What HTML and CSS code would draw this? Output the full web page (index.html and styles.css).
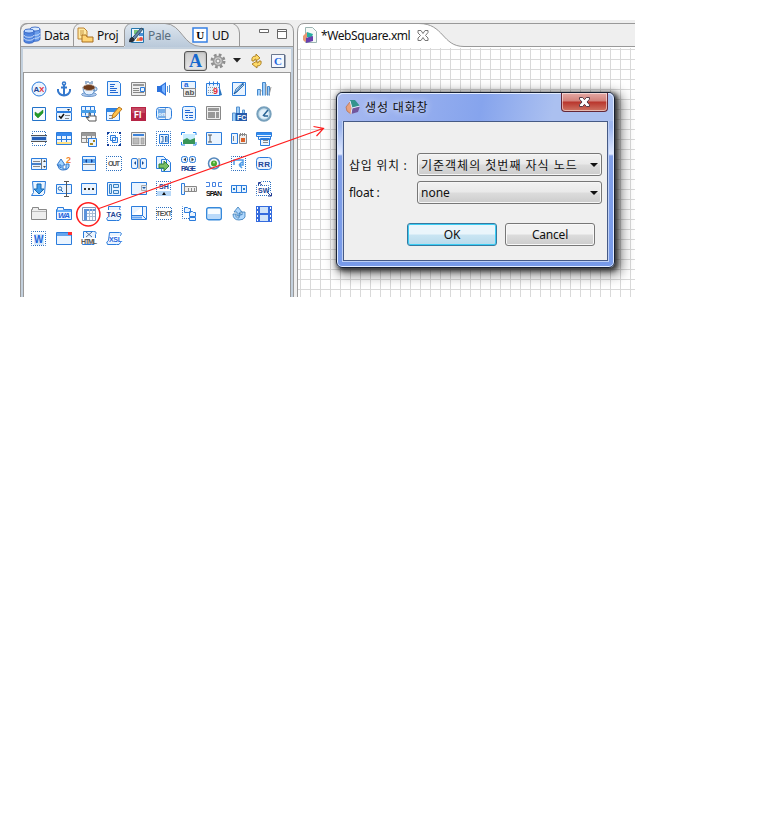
FILE: index.html
```html
<!DOCTYPE html>
<html lang="ko">
<head>
<meta charset="utf-8">
<title>WebSquare</title>
<link rel="stylesheet" href="styles.css">
</head>
<body>
<main class="workbench">
<section class="side">
  <svg class="tabshape" width="274" height="28" viewBox="0 0 274 28">
    <defs><linearGradient id="tabfill" x1="0" y1="0" x2="0" y2="1"><stop offset="0" stop-color="#dce5ee"/><stop offset="1" stop-color="#b8c8d9"/></linearGradient></defs>
    <path d="M.5 28V10Q.5 3.500 7 3.500H266Q273.500 3.500 273.500 12V28" fill="#efefef" stroke="#999"/>
    <path d="M104.500 28V10Q104.500 4 111 4H145C162 4 163 26.500 181 26.500V28Z" fill="url(#tabfill)"/>
    <path d="M.5 27.500V10Q2 4 8 3.500M53.500 26V10Q55 4 60 3.500M104.500 26V10Q106 4 111 3.500H145C162 4 163 26.500 181 26.500H273M0 26.500H104M219.500 26V13Q219 6 213 3.500" fill="none" stroke="#999"/>
  </svg>
  <nav class="tabs">
    <div class="tab data"><svg width="18" height="18" viewBox="0 0 18 18"><g stroke="#2458bd" stroke-width=".8"><path d="M7 3v10c0 3 10 3 10 0V3" fill="#6d9fec"/><ellipse cx="12" cy="3" rx="5" ry="2" fill="#d8eaff"/><path d="M7 7c0 3 10 3 10 0M7 10c0 3 10 3 10 0" fill="none" stroke="#dcecff"/><path d="M1 5v10c0 3 10 3 10 0V5" fill="#5185df"/><ellipse cx="6" cy="5" rx="5" ry="2" fill="#b9d5ff"/><path d="M1 9c0 3 10 3 10 0M1 12c0 3 10 3 10 0" fill="none" stroke="#e5f0ff"/></g></svg><span>Data</span></div>
    <div class="tab proj"><svg width="17" height="17" viewBox="0 0 17 17"><path d="M1 1h6l3 3v8H1z" fill="#ffe9a2" stroke="#bd8435"/><path d="M3 4h4M3 6h4M3 8h3" stroke="#c99847"/><path d="M5 15V8h4l1 2h6v5z" fill="#ffd475" stroke="#a76e20"/></svg><span>Proj</span></div>
    <div class="tab pale"><svg width="17" height="17" viewBox="0 0 17 17"><path d="M3.500 1.500h12v14h-12z" fill="#e8f4ff" stroke="#2577ad"/><path d="M6 3h4v4H6z" fill="#7ac879"/><path d="M8 14l2-4 2 4z" fill="#ef9a32"/><circle cx="13" cy="12" r="2" fill="#e84e46"/><path d="M11 6h4v3h-4z" fill="#4a91d8"/><path d="M1 15q0-5 4-5l2 2q-1 4-6 3" fill="#252d38"/><path d="M5 10L13 1l2 1-8 10" fill="#6389a7" stroke="#304d69"/></svg><span>Pale</span></div>
    <div class="tab ud"><svg width="16" height="16" viewBox="0 0 16 16"><rect x="1" y="1" width="14" height="14" fill="#fff" stroke="#3680e4" stroke-width="1.500"/><text x="8" y="12" class="slab">U</text></svg><span>UD</span></div>
    <svg class="winbtns" width="30" height="12" viewBox="0 0 30 12"><path d="M.5.5h9v3h-9zM18.500.5h9v9h-9zM19 2.500h8" fill="#fff" stroke="#666"/></svg>
  </nav>
  <div class="sidebody">
    <div class="toolbar">
      <div class="abtn">A</div>
      <svg class="gear" width="16" height="16" viewBox="0 0 16 16"><circle cx="8" cy="8" r="6" fill="none" stroke="#8e8e8e" stroke-width="3" stroke-dasharray="2.600 2.110"/><circle cx="8" cy="8" r="4.500" fill="#ccc" stroke="#999" stroke-width="1.500"/><circle cx="8" cy="8" r="2" fill="#f0f0f0" stroke="#8b8b8b"/></svg>
      <svg class="drop" width="8" height="5" viewBox="0 0 8 5"><path d="M0 0h8L4 4.500z" fill="#222"/></svg>
      <svg class="sync" width="16" height="16" viewBox="0 0 16 16"><g fill="#ffda67" stroke="#a77c20" stroke-width=".9"><path d="M4 8Q3 3 8 3V1l4 4-4 3V6Q6 6 6 8z"/><path d="M13 8q1 5-4 5v2l-5-4 5-3v2q2 0 2-2z"/></g></svg>
      <svg class="cbtn" width="16" height="16" viewBox="0 0 16 16"><path d="M1.500 1.500h13v13h-13z" fill="#f4f8ff" stroke="#6b7890"/><path d="M2 14.500h13V2" fill="none" stroke="#52627f"/><text x="8" y="12" class="slab blue">C</text></svg>
    </div>
    <div class="palette">
<svg viewBox="0 0 16 16"><circle class="o" cx="8" cy="8" r="7"/><text x="2.500" y="11" class="t8 navy">A</text><text x="8" y="11" class="t8 r">X</text></svg>
<svg viewBox="0 0 16 16"><g fill="none" stroke="#3478cd" stroke-width="2"><circle cx="8" cy="2.500" r="1.500" stroke-width="1.500"/><path d="M8 4v10M5 6.500h6M2 8v2q1 4 6 4.500 5-.5 6-4.500V8"/></g></svg>
<svg viewBox="0 0 16 16"><path d="M5 0v3M7 0v2M9 1v2M11 0v3" stroke="#3769a2"/><ellipse cx="8" cy="13.500" rx="7.500" ry="2" fill="#b2cbed" stroke="#6c96cb"/><path d="M2 6q0 8 6 8t6-8" fill="#e5f1ff" stroke="#568bc7"/><circle cx="14" cy="8" r="2" fill="none" stroke="#568bc7"/><ellipse cx="8" cy="6.500" rx="6" ry="3" fill="#6e3b1c" stroke="#b9aca6"/></svg>
<svg viewBox="0 0 16 16"><path class="b" d="M1.500.5h11l2 2v12h-13z"/><path class="l" d="M4 3.500h5M4 5.500h4M4 7.500h7M4 9.500h6M4 11.500h8"/></svg>
<svg viewBox="0 0 16 16"><path class="g" d="M.5 1.500h14v13H.5z"/><path d="M2 3h11v2H2z" fill="#999"/><path class="gl" d="M2 7.500h6M2 9.500h6M2 11.500h11"/><path class="b" d="M9.500 6.500h4v4h-4z"/></svg>
<svg viewBox="0 0 16 16"><path d="M1 5h3l6-4v14l-6-4H1z" fill="#2c72dd"/><path d="M6 5l3-2v10L6 10z" fill="#7bb4ff"/><path d="M11.500 5v6M13.500 4v8" stroke="#5791cf"/></svg>
<svg viewBox="0 0 16 16"><path class="b" d="M.5.5h14v7H.5z"/><path class="g" d="M2.500 7.500h12v8h-12z"/><text class="t8 blue" x="3" y="6">a</text><text class="t8 gray" x="4" y="14">ab</text></svg>
<svg viewBox="0 0 16 16"><path d="M13 4l3 10-3 1z" fill="#2b75bf"/><path class="b" d="M.5 2.500h13v12H.5zM3.500.5v4M7.500.5v4M11.500.5v4"/><path d="M2 6.500h11M2 9.500h5M2 11.500h5" stroke="#999" stroke-dasharray="1 1"/><text x="7" y="13" class="t9 r">9</text></svg>
<svg viewBox="0 0 16 16"><path class="b" d="M1.500 1.500h13v13h-13z"/><path d="M3 13l2-5 7-6 1 2-7 7z" fill="#d9efff" stroke="#3779b7"/><path d="M3 13l9-10" stroke="#1452a1"/></svg>
<svg viewBox="0 0 16 16"><path d="M1.500 14.500v-6h3v6M6.500 14.500v-13h3v13M11.500 14.500v-9h2v9" fill="#9ccfff" stroke="#4688cb"/><path d="M4 14l1-5M10 14V3M13 14l2-8" stroke="#999"/></svg>
<svg viewBox="0 0 16 16"><path d="M1.500 1.500h13v13h-13z" fill="#f7faff" stroke="#2272c8"/><path d="M4 6l3 2 5-4v3l-5 5-3-3z" fill="#249c29" stroke="#197d20" stroke-width=".5"/></svg>
<svg viewBox="0 0 16 16"><path class="b" d="M.5 1.500h15v4H.5zM.5 6.500h15v8H.5z"/><path d="M11 3h3l-1.500 2z" fill="#333"/><path d="M3 10l2 2 3-4" fill="none" stroke="#111" stroke-width="1.500"/><path class="gl" d="M9 9.500h5M9 12.500h4"/></svg>
<svg viewBox="0 0 16 16"><path class="b" d="M.5.5h13v10H.5zM4.500.5v9M9.500.5v9"/><path d="M0 4h15v3H0z" fill="#479ee8"/><path d="M8 15l-3-4 3 1V7h1v3h6v5z" fill="#fff" stroke="#555"/></svg>
<svg viewBox="0 0 16 16"><path class="b" d="M.5 2.500h13v12H.5z"/><path d="M1 3h12v3H1z" fill="#3288e5"/><path class="gl" d="M3 9.500h8M3 12.500h4"/><path d="M6 12l1-4 6-7 3 2-7 8z" fill="#ffc34c" stroke="#bd761b"/></svg>
<svg viewBox="0 0 16 16"><path d="M0 1h15v14H0z" fill="#b62445"/><path d="M1 2h13v5H1z" fill="#c64761"/><text x="3" y="12" class="fl">Fl</text></svg>
<svg viewBox="0 0 16 16"><rect class="b" x=".5" y="1.500" width="15" height="12" rx="3"/><path d="M2 3h7v9H2z" fill="#75ade8"/><path d="M9.500 2v11" stroke="#8caaca"/><text class="t6 white" x="2" y="10">on</text></svg>
<svg viewBox="0 0 16 16"><rect class="b" x="1.500" y=".5" width="13" height="14" rx="2"/><path class="l" d="M4 4.500h5M4 6.500h8M4 9.500h3M8 9.500h4M5 11.500h2M8 11.500h4"/></svg>
<svg viewBox="0 0 16 16"><path class="g" d="M.5.5h14v13H.5z"/><path d="M2 2h11v3H2zM2 6h7v6H2zM10 6h3v6h-3z" fill="#999"/></svg>
<svg viewBox="0 0 16 16"><path d="M1.500 15V7h3v8M5.500 15V1h3v14M11.500 7V4h2v3" fill="#9ccdf8" stroke="#5792cf"/><path d="M5 7h11v8H5z" fill="#255bab"/><text x="6" y="14" class="t7 white">FC</text></svg>
<svg viewBox="0 0 16 16"><circle cx="8" cy="8" r="6.700" fill="#c2ddec" stroke="#77a0bc" stroke-width="2"/><circle cx="8" cy="8" r="4.500" fill="#e4f1fa"/><path d="M7 10l5-6M8 10h4" stroke="#2b6696" stroke-width="1.500"/></svg>
<svg viewBox="0 0 16 16"><path class="dot" d="M1.500.5h13v14h-13z"/><path d="M0 4h16v7H0z" fill="#c9dff7"/><path d="M0 4.500h16M0 10.500h16" stroke="#555"/><path d="M1 6h14v3H1z" fill="#245eb6"/></svg>
<svg viewBox="0 0 16 16"><path class="b" d="M.5 1.500h15v12H.5zM5.500 2v11M10.500 2v11M1 8.500h14"/><path d="M1 2h14v3H1z" fill="#3688ed"/><path d="M1 11h14v2H1z" fill="#ffe080"/></svg>
<svg viewBox="0 0 16 16"><path class="g" d="M.5 1.500h14v10H.5zM5.500 2v9M10.500 2v9M1 7.500h13"/><path d="M1 2h13v3H1z" fill="#999"/><path class="b" d="M7.500 7.500h8v8h-8z"/><path d="M9 12h3v2H9zM12 9h2v2h-2z" fill="#a48724"/></svg>
<svg viewBox="0 0 16 16"><path class="dot" d="M1.500 1.500v13h13v-13z"/><path d="M1 1h2v2H1zM13 1h2v2h-2zM1 13h2v2H1zM13 13h2v2h-2z" fill="#133b98"/><path class="b" d="M4.500 4.500h5v5h-5zM6.500 6.500h5v5h-5z"/></svg>
<svg viewBox="0 0 16 16"><path class="g" d="M.5 1.500h14v13H.5z"/><path d="M2 3h11v2H2z" fill="#3c82d9"/><path d="M2 7h6v6H2zM10 7h3v6h-3z" fill="#bbb" stroke="#888" stroke-width=".5"/></svg>
<svg viewBox="0 0 16 16"><path class="dot" d="M.5.5h14v14H.5z"/><path class="b" d="M3.500 3.500h9v9h-9z"/><path d="M5 5.500h2V11H5M9.500 11V5.500h1.500V11" fill="none" stroke="#2e6bb0"/></svg>
<svg viewBox="0 0 16 16"><path d="M2 3h12v10H2z" fill="#c8edff"/><path d="M2 9l4-2 3 2 5-2v6H2z" fill="#399558"/><path d="M.5 4V1.500H4M12 1.500h3V4M.5 11v3H4M12 14h3v-3" fill="none" stroke="#2384e8"/></svg>
<svg viewBox="0 0 16 16"><path class="b" d="M.5 1.500h15v12H.5z"/><path d="M2 4h4M4 4v7M2 11h4" fill="none" stroke="#555"/></svg>
<svg viewBox="0 0 16 16"><path class="b" d="M.5 2.500h6v10h-6z"/><path class="g" d="M8.500 3.500h7v9h-7z"/><path class="gl" d="M2.500 5v5M9.500 2v3M11.500 2v3M13.500 2v3"/><path d="M10 7h4v4h-4z" fill="#dd6128"/></svg>
<svg viewBox="0 0 16 16"><path class="b" d="M.5 1.500h15v4H.5zM2.500 5.500h12v3h-12zM4.500 7.500h9v7h-9z"/><path d="M1 2h14v2H1z" fill="#328df0"/><path class="gl" d="M7 9.500h5M7 11.500h5"/></svg>
<svg viewBox="0 0 16 16"><path class="b" d="M.5 2.500h15v11H.5z"/><path d="M10.500 3v10" stroke="#777"/><path class="gl" d="M2 5.500h7M2 10.500h7"/><path d="M1 7h9v2H1z" fill="#4680c9"/><path d="M12 6h3l-1.500-2zM12 10h3l-1.500 2z" fill="#444"/></svg>
<svg viewBox="0 0 16 16"><path d="M1 9l4-6 4 6H7v4h3V8h3q1 6-6 6-5 0-5-5h3v3z" fill="#a2d4ff" stroke="#3578ca"/><text class="t9 orange" x="10" y="7">2</text></svg>
<svg viewBox="0 0 16 16"><path class="b" d="M1.500.5h13v14h-13z"/><path d="M2 3h12v4H2z" fill="#5ca5ee"/><path d="M4 5l2-2v4zM12 5l-2-2v4z" fill="#123b90"/><path class="gl" d="M2 8.500h12"/></svg>
<svg viewBox="0 0 16 16"><path class="dot" d="M.5.5h15v14H.5z"/><text class="t7 gray" x="2" y="10" textLength="12">OUT</text></svg>
<svg viewBox="0 0 16 16"><rect class="b" x=".5" y="2.500" width="6" height="10" rx="1.500"/><rect class="b" x="9.500" y="2.500" width="6" height="10" rx="1.500"/><path d="M5 5v4L3 7zM11 5v4l2-2z" fill="#174990"/><path class="gl" d="M8 2v11"/></svg>
<svg viewBox="0 0 16 16"><path class="b" d="M.5.5h7l3 3v9H.5zM5.500 3.500h6l3 3v9h-9z"/><path d="M3 8h5V5l5 5-5 5v-3H3z" fill="#78bd65" stroke="#31813a"/></svg>
<svg viewBox="0 0 16 16"><rect class="b" x=".5" y=".5" width="6" height="6" rx="2"/><rect class="b" x="8.500" y=".5" width="6" height="6" rx="2"/><path d="M5 1.500v4L2.500 3.500zM10.500 1.500v4l2.500-2z" fill="#444"/><text class="t7 navy" x="0" y="15" textLength="15">PAGE</text></svg>
<svg viewBox="0 0 16 16"><circle cx="8" cy="7.500" r="5.500" fill="#f4f7fb" stroke="#5487bc" stroke-width="1.500"/><circle cx="8" cy="7.500" r="3" fill="#49a82f"/><circle cx="8" cy="6.500" r="1" fill="#b4e49d"/></svg>
<svg viewBox="0 0 16 16"><path class="dot" d="M.5.5h14v14H.5z"/><path d="M3 9V4h9v5H8M8 9l3-3M8 9l3 3" fill="none" stroke="#4b9be8" stroke-width="1.500"/></svg>
<svg viewBox="0 0 16 16"><rect class="b" x=".5" y="1.500" width="15" height="12" rx="3"/><text class="t8 navy" x="2" y="11" textLength="12">RR</text></svg>
<svg viewBox="0 0 16 16"><path class="b" d="M1.500.5h13l-1 12-2 2H.5l2-3z"/><path d="M6 3h4v5h3l-5 5-5-5h3z" fill="#429bea" stroke="#1769ad"/></svg>
<svg viewBox="0 0 16 16"><path class="b" d="M.5 3.500h15v9H.5z"/><path d="M8 .5h5M10.500 1v14M8 15.500h5" stroke="#555"/><circle cx="4" cy="7.500" r="1.700" fill="#fff" stroke="#1d65ae"/><path d="M5 9l2 2" stroke="#1d65ae"/></svg>
<svg viewBox="0 0 16 16"><path class="b" d="M.5 2.500h15v11H.5z"/><path d="M3 7h2v2H3zM7 7h2v2H7zM11 7h2v2h-2z" fill="#333"/></svg>
<svg viewBox="0 0 16 16"><path class="b" d="M1.500 1.500h13v13h-13z"/><path d="M3.500 3.500h2v9h-2zM7.500 3.500h5v3h-5zM7.500 9.500h5v3h-5z" fill="#d4eaff" stroke="#387fbf"/></svg>
<svg viewBox="0 0 16 16"><path class="b" d="M.5 1.500h15v12H.5z"/><path d="M10.500 4.500h5v5h-5z" fill="#dceafa" stroke="#aaa"/><path d="M11 6h4l-2 2z" fill="#245a9d"/></svg>
<svg viewBox="0 0 16 16"><path class="dot" d="M.5.5h14v14H.5z"/><text class="t7 navy" x="3" y="8">SH</text><path d="M1 10h14v5H1z" fill="#b9d9f8"/><path d="M6 14l2-3 2 3z" fill="#111"/></svg>
<svg viewBox="0 0 16 16"><path class="b" d="M.5 2.500h3v11h-3z"/><path class="g" d="M3.500 5.500h12v5h-12z"/><path class="gl" d="M7.500 7v3M10.500 7v3M13.500 7v3"/></svg>
<svg viewBox="0 0 16 16"><path d="M0 1.500h3.500v4H0M6.500 1.500h3v4h-3zM16 1.500h-3.500v4H16" fill="none" stroke="#4783e1"/><text class="t7 black" x="0" y="15" textLength="16">SPAN</text></svg>
<svg viewBox="0 0 16 16"><path class="b" d="M.5 4.500h15v7H.5zM5.500 4.500v7M10.500 4.500v7"/><path d="M2 7h2v2H2zM12 7h2v2h-2z" fill="#2380c8"/></svg>
<svg viewBox="0 0 16 16"><path class="dot" d="M.5 4.500h12v10H.5z"/><text class="t7 navy" x="2" y="12">SW</text><path d="M2.500 4V1.500H5M3 2l3 2M15.500 12v3H12M15 15l-3-3" fill="none" stroke="#243e95"/><path class="dot" d="M5.500.5h9v11"/></svg>
<svg viewBox="0 0 16 16"><path class="g" d="M.5 13.500v-10h1v-2h6v2h8v10z"/><path d="M1 5.500h14" stroke="#bbb"/></svg>
<svg viewBox="0 0 16 16"><path class="b" d="M.5 13.500v-10h1v-2h6v2h8v10z"/><path d="M1 4h14v2H1z" fill="#68b0f9"/><text class="t8 blue ital" x="2" y="12" textLength="12">WA</text></svg>
<svg viewBox="0 0 16 16"><path d="M1.500 1.500h13v13h-13z" fill="#f9fbff" stroke="#839abd"/><path d="M3 3h11v2H3zM3 5h3v9H3z" fill="#5b92db"/><path d="M6 7.500h8M6 10.500h8M8.500 3v11M11.500 3v11" stroke="#a8bdd4"/></svg>
<svg viewBox="0 0 16 16"><path class="b" d="M2.500.5h12q-2 2 0 4v8q-1 3-4 2h-9q-2-2 1-4z"/><path d="M0 4h16v7H0z" fill="#fff"/><text class="t8 navy" x=".5" y="10.500" textLength="15" lengthAdjust="spacingAndGlyphs">TAG</text></svg>
<svg viewBox="0 0 16 16"><path class="b" d="M.5.5h15v13H.5zM.5 9.500h11v-9M11 9l4 4"/><path d="M1 11.500h10" stroke="#68a7f2" stroke-width="2"/></svg>
<svg viewBox="0 0 16 16"><path class="dot" d="M.5 1.500h15v12H.5z"/><text class="t7 gray" x="0" y="10" textLength="16">TEXT</text></svg>
<svg viewBox="0 0 16 16"><path class="dot" d="M1.500.5v12h8M4.500 6.500h5"/><path class="b" d="M3.500 4.500v-3h3l1 1h2v4h-6zM8.500 5.500h3l1 1h2v4h-6zM8.500 11.500h6v3h-6z"/></svg>
<svg viewBox="0 0 16 16"><rect x=".7" y="1.700" width="14.600" height="12" rx="2" fill="#f7fcff" stroke="#3689db" stroke-width="1.400"/><path d="M2 8h12v5H2z" fill="#b9dafa"/></svg>
<svg viewBox="0 0 16 16"><path d="M3 6l4-5 4 5H9v4H6V6zM2 8h3q-1 4 3 4V7l3 2V6h3v5q-1 3-6 3-6 0-6-6z" fill="#afd8ff" stroke="#3678b5" stroke-width=".8"/></svg>
<svg viewBox="0 0 16 16"><path d="M0 0h16v16H0z" fill="#346bde"/><path d="M4 1h8v6H4zM4 9h8v6H4z" fill="#d0e4fa"/><path d="M1.500 1v14M14.500 1v14" stroke="#fff" stroke-dasharray="2 2"/></svg>
<svg viewBox="0 0 16 16"><path class="dot" d="M.5.5h14v14H.5z"/><path d="M3 3h10v11H3z" fill="#d7e9fb"/><text class="t10 blue" x="3" y="12">W</text></svg>
<svg viewBox="0 0 16 16"><path class="b" d="M.5 1.500h15v12H.5z"/><path d="M1 2h14v3H1z" fill="#65a5ed"/><path d="M12 1h4v3h-4z" fill="#ff3030"/></svg>
<svg viewBox="0 0 16 16"><path class="b" d="M2.500.5h10q4 0 2 3v8q-1 3-4 2h-9q-2-3 1-4z"/><path d="M5 1l6 5M11 1L5 6" stroke="#4f6f9c"/><path d="M0 7h16v6H0z" fill="#fff"/><text class="t7 gray" x="0" y="13" textLength="16">HTML</text></svg>
<svg viewBox="0 0 16 16"><path class="b" d="M3.500 1.500h10q3 0 1 3v7q-1 3-4 2h-9q-2-3 1-4z"/><path d="M4 5h13v6H4z" fill="#fff"/><text class="t7 blue" x="3" y="11" textLength="13">XSL</text></svg>
    </div>
  </div>
</section>
<section class="editor">
  <div class="edtabs">
    <svg class="edshape" width="338" height="28" viewBox="0 0 338 28"><path d="M.5 28V12Q.5 3.500 7 3.500H122C147 3.500 145 26.500 167 26.500H338V28Z" fill="#fff"/><path d="M.5 28V12Q.5 3.500 7 3.500H338M122 3.500C147 3.500 145 26.500 167 26.500H338" fill="none" stroke="#999"/></svg>
    <svg class="fileicon" width="16" height="17" viewBox="0 0 16 17"><path d="M3.500.5h7l4 4v11h-11z" fill="#f6faf8" stroke="#9bb4b2"/><path d="M1 9l4-4v8l-2 2-2-2z" fill="#e89975"/><path d="M5 5l6 2-2 5-4-2z" fill="#28afa1"/><path d="M4 11l7-2v5l-7 2z" fill="#6840ad"/></svg>
    <span class="edname">*WebSquare.xml</span>
    <svg class="edclose" width="12" height="11" viewBox="0 0 12 11"><path d="M1 .5h3l2 3 2-3h3v2L8.500 5.500 11 8v2.500H8l-2-3-2 3H1V8l2.500-2.500L1 3z" fill="#fff" stroke="#777"/></svg>
  </div>
  <div class="canvas"></div>
</section>
<section class="dialog">
  <header class="title">
    <svg width="16" height="16" viewBox="0 0 16 16"><path d="M1 8l4-5 2 5-1 7-4-3z" fill="#e8a07d" stroke="#bf7d61"/><path d="M5 1h5l5 6-8 2z" fill="#33948e"/><path d="M7 9l8-2-2 6-7 2z" fill="#71569d"/><path d="M5 2l2 7-1 6M7 9l8-2" stroke="#e5efff" fill="none"/></svg>
    <h1>생성 대화창</h1>
    <div class="close"><svg width="11" height="10" viewBox="0 0 11 10"><path d="M.5.5h3.200l1.800 2.200L7.300.5h3.200v1.700L8 5l2.500 2.800v1.700H7.300L5.500 7.300 3.700 9.500H.5V7.800L3 5 .5 2.200z" fill="#fff" stroke="#553d48"/></svg></div>
  </header>
  <div class="form">
    <div class="row"><label class="kolabel">삽입 위치 :</label><div class="select"><span class="ko">기준객체의 첫번째 자식 노드</span><i></i></div></div>
    <div class="row"><label>float :</label><div class="select"><span>none</span><i></i></div></div>
    <div class="buttons"><button class="ok">OK</button><button>Cancel</button></div>
  </div>
</section>
<svg class="callout" width="320" height="120" viewBox="0 0 320 120"><g fill="none" stroke="#ff1e1e" stroke-width="1.200"><circle cx="18.300" cy="94.300" r="11.600" stroke-width="1.500"/><path d="M29 88.500L253 8.500M243.500 6.500l10 1.800-7 7.700" /></g></svg>
</main>
</body>
</html>
```
FILE: styles.css
```css
* { box-sizing: border-box; }
body { margin: 0; padding: 20px; background: #fff; color: #111; font: 12px "Noto Sans", "Noto Sans CJK KR", sans-serif; }
svg { display: block; flex: none; }
.workbench { position: relative; display: flex; gap: 3px; width: 615px; height: 277px; overflow: hidden; background: #efefef; }
.side { position: relative; width: 274px; height: 277px; }
.tabshape, .edshape { position: absolute; left: 0; top: 0; }
.tabs { position: relative; display: flex; height: 27px; padding-top: 4px; }
.tab { display: flex; align-items: center; height: 22px; white-space: nowrap; line-height: 20px; letter-spacing: -.25px; }
.tab span { position: relative; top: 1px; }
.data { width: 54px; padding-left: 3px; gap: 3px; }
.proj { width: 51px; padding-left: 3px; gap: 3px; }
.pale { width: 66px; padding-left: 3px; gap: 3px; color: #5a6d7e; }
.ud { width: 49px; padding-left: 1px; gap: 4px; }
.winbtns { margin: 5px 0 0 19px; }
.slab { font: bold 11px "Liberation Serif", serif; text-anchor: middle; }
.blue { fill: #1d65dc; }
.sidebody { position: relative; height: 250px; padding: 2px 2px 0; border: solid #999; border-width: 0 1px; background: #c3d0dd; }
.toolbar { display: flex; align-items: center; justify-content: flex-end; height: 23px; background: #efefef; padding-right: 5px; }
.abtn { width: 23px; height: 20px; border: 1px solid #555; border-radius: 3px; background: linear-gradient(#ccc, #e9e9e9); box-shadow: inset 0 0 2px #888; color: #1768ce; font: bold 18px/19px "Liberation Serif", serif; text-align: center; }
.gear { margin-left: 3px; }
.drop { margin-left: 7px; }
.sync { margin-left: 7px; }
.cbtn { margin-left: 6px; }
.palette { display: grid; grid-template-columns: repeat(10, 16px); grid-auto-rows: 16px; gap: 9px; align-content: start; height: 225px; padding: 8px 0 0 7px; border: 1px solid #999; border-bottom: 0; background: #fff; }
.palette svg { width: 16px; height: 16px; overflow: visible; }
.b, .o { fill: #eaf4ff; stroke: #2b7cdc; }
.g { fill: #eee; stroke: #888; }
.l { fill: none; stroke: #2167d1; }
.gl { fill: none; stroke: #888; }
.dot { fill: none; stroke: #2d70c0; stroke-dasharray: 1 1; stroke-dashoffset: .5; }
.t6, .t7, .t8, .t9, .t10 { font-family: "Liberation Sans", sans-serif; font-weight: bold; }
.t6 { font-size: 6px; } .t7 { font-size: 7px; } .t8 { font-size: 8px; } .t9 { font-size: 9px; } .t10 { font-size: 10px; }
.ital { font-style: italic; }
.r { fill: #e52e36; } .gray { fill: #555; } .white { fill: #fff; } .navy { fill: #214596; } .orange { fill: #f28329; } .black { fill: #111; }
.fl { font: bold 9px Roboto, sans-serif; fill: #fff; }
.editor { width: 338px; height: 277px; }
.edtabs { position: relative; display: flex; align-items: flex-start; height: 28px; padding: 7px 0 0 5px; }
.fileicon, .edname, .edclose { position: relative; }
.edname { width: 89px; margin-left: 3px; line-height: 17px; white-space: nowrap; letter-spacing: -.42px; }
.edclose { margin: 3px 0 0 7px; }
.canvas { height: 249px; border-left: 1px solid #999; background-color: #fff; background-image: linear-gradient(#d9d9d9 1px, transparent 1px), linear-gradient(90deg, #d9d9d9 1px, transparent 1px); background-size: 10px 10px; background-position: 2px 1px; background-repeat: repeat; }
.dialog { position: absolute; left: 316px; top: 72px; width: 279px; height: 176px; padding: 0 6px; border: 1px solid #172031; border-radius: 6px; background: linear-gradient(#a3b9ee 0, #9cb5ee 34px, #e1eaff 61px, #819fe7 63px, #779ae9 100%); box-shadow: inset 0 0 0 1px #e1ebff, 2px 2px 5px 1px #333, 4px 4px 12px 4px rgba(0,0,0,.4); }
.title { position: relative; display: flex; align-items: center; height: 28px; margin: 0 -5px; padding-left: 7px; background: linear-gradient(100deg, #a8baf0, #86a4ed 52%, #abc0f0 78%); border-radius: 5px 5px 0 0; box-shadow: inset 0 1px #e2ecff; }
h1 { margin: 1px 0 0 4px; font-size: 12px; font-weight: 400; line-height: 20px; letter-spacing: .85px; text-shadow: 0 0 7px #fff; }
.close { position: absolute; right: 5px; top: 0; display: flex; width: 47px; height: 19px; align-items: center; justify-content: center; border: 1px solid #642738; border-top: 0; border-radius: 0 0 4px 4px; background: linear-gradient(#e5aaa6 0, #d2817a 8px, #b9352c 9px, #ce7564); box-shadow: inset 0 0 0 1px rgba(255,255,255,.5); }
.form { height: 140px; padding: 31px 5px 0; border: 1px solid #465a85; background: #efefef; box-shadow: 0 0 0 1px #bed0f5; }
.row { display: flex; align-items: center; height: 23px; margin-bottom: 5px; }
.row label { width: 68px; white-space: nowrap; letter-spacing: -.2px; }
.row .kolabel { letter-spacing: .7px; }
.ko { letter-spacing: 1px; }
.select { display: flex; align-items: center; justify-content: space-between; width: 185px; height: 23px; padding: 0 3px 0 3px; border: 1px solid #777; border-radius: 3px; background: linear-gradient(#f2f2f2 0, #e9e9e9 48%, #dcdcdc 52%, #ccc); white-space: nowrap; box-shadow: inset 0 0 0 1px #f6f6f6; }
.select i { border: 4px solid transparent; border-top-color: #111; border-bottom: 0; }
.buttons { display: flex; gap: 8px; margin: 19px 0 0 58px; }
button { width: 90px; height: 23px; padding: 0; border: 1px solid #777; border-radius: 3px; background: linear-gradient(#f2f2f2 48%, #dcdcdc 52%, #ccc); box-shadow: inset 0 0 0 1px #f8f8f8; font: inherit; letter-spacing: -.2px; color: #111; }
button.ok { border-color: #3679a0; background: linear-gradient(#eaf5fb 48%, #c9e5f3 52%, #b8daeb); box-shadow: inset 0 0 0 1px #3bcdf4; }
.callout { position: absolute; left: 50px; top: 100px; }
```
